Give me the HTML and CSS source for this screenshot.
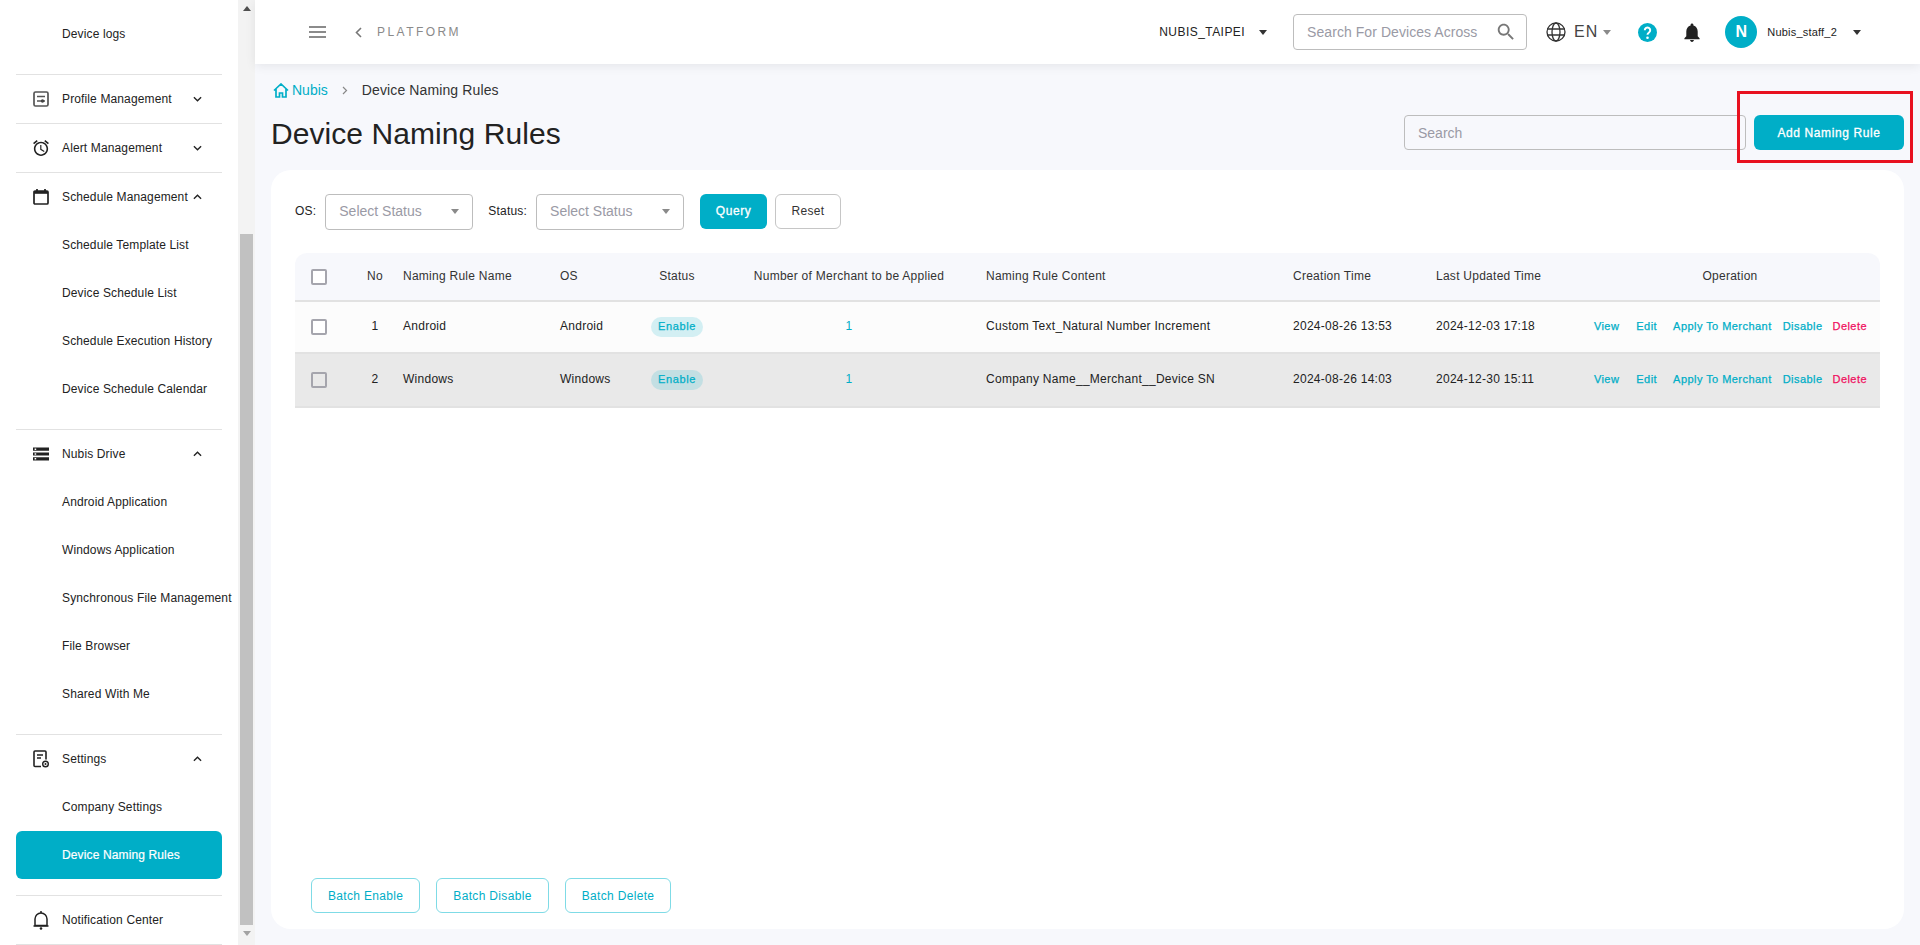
FILE: index.html
```html
<!DOCTYPE html>
<html lang="en">
<head>
<meta charset="utf-8">
<title>Device Naming Rules</title>
<link rel="stylesheet" href="styles.css">
</head>
<body>
<div class="app">
  <aside class="sidebar">
    <nav class="nav">
      <div class="group group-first">
        <a class="sub">Device logs</a>
      </div>
      <div class="group">
        <div class="head">
          <svg class="ico" viewBox="0 0 16 16"><rect x="1" y="1" width="14" height="14" rx="1.500" fill="none" stroke="#555" stroke-width="1.700"/><path d="M4 5.500h8M4 10h8" stroke="#555" stroke-width="1.300"/><circle cx="9.500" cy="10" r="1.700" fill="#444"/></svg>
          <span class="head-label">Profile Management</span>
          <svg class="chev" viewBox="0 0 10 6"><path d="M1 1l4 4 4-4" fill="none" stroke="#222" stroke-width="1.5"/></svg>
        </div>
      </div>
      <div class="group">
        <div class="head">
          <svg class="ico" viewBox="2 1.800 20 20.200"><path d="M22 5.72l-4.6-3.86-1.29 1.53 4.6 3.86L22 5.72zM7.88 3.39L6.6 1.86 2 5.71l1.29 1.53 4.59-3.85zM12.5 8H11v6l4.75 2.85.75-1.23-4-2.37V8zM12 4c-4.97 0-9 4.03-9 9s4.02 9 9 9c4.97 0 9-4.03 9-9s-4.03-9-9-9zm0 16c-3.87 0-7-3.13-7-7s3.13-7 7-7 7 3.13 7 7-3.13 7-7 7z" fill="#222"/></svg>
          <span class="head-label">Alert Management</span>
          <svg class="chev" viewBox="0 0 10 6"><path d="M1 1l4 4 4-4" fill="none" stroke="#222" stroke-width="1.5"/></svg>
        </div>
      </div>
      <div class="group group-open">
        <div class="head">
          <svg class="ico" viewBox="0 0 16 16"><path d="M4 0v2M12 0v2" stroke="#222" stroke-width="1.7"/><rect x="1" y="2" width="14" height="13" rx="1" fill="none" stroke="#222" stroke-width="1.7"/><rect x="1" y="2" width="14" height="2.800" fill="#222"/></svg>
          <span class="head-label">Schedule Management</span>
          <svg class="chev" viewBox="0 0 10 6"><path d="M1 5l4-4 4 4" fill="none" stroke="#222" stroke-width="1.5"/></svg>
        </div>
        <a class="sub">Schedule Template List</a>
        <a class="sub">Device Schedule List</a>
        <a class="sub">Schedule Execution History</a>
        <a class="sub">Device Schedule Calendar</a>
      </div>
      <div class="group group-open">
        <div class="head">
          <svg class="ico" viewBox="2 4 20 16"><path d="M2 20h20v-4H2v4zm2-3h2v2H4v-2zM2 4v4h20V4H2zm4 3H4V5h2v2zm-4 7h20v-4H2v4zm2-3h2v2H4v-2z" fill="#222"/></svg>
          <span class="head-label">Nubis Drive</span>
          <svg class="chev" viewBox="0 0 10 6"><path d="M1 5l4-4 4 4" fill="none" stroke="#222" stroke-width="1.5"/></svg>
        </div>
        <a class="sub">Android Application</a>
        <a class="sub">Windows Application</a>
        <a class="sub">Synchronous File Management</a>
        <a class="sub">File Browser</a>
        <a class="sub">Shared With Me</a>
      </div>
      <div class="group group-open">
        <div class="head">
          <svg class="ico ico-tall" viewBox="0 0 16 18"><path d="M8 16.500H2a1 1 0 0 1-1-1V2a1 1 0 0 1 1-1h10a1 1 0 0 1 1 1v7.500" fill="none" stroke="#222" stroke-width="1.6"/><path d="M4 5h6M4 8h4" stroke="#222" stroke-width="1.4"/><circle cx="12.500" cy="14" r="2.800" fill="none" stroke="#222" stroke-width="1.400"/><circle cx="12.500" cy="14" r="1" fill="#222"/></svg>
          <span class="head-label">Settings</span>
          <svg class="chev" viewBox="0 0 10 6"><path d="M1 5l4-4 4 4" fill="none" stroke="#222" stroke-width="1.5"/></svg>
        </div>
        <a class="sub">Company Settings</a>
        <a class="sub sub-active">Device Naming Rules</a>
      </div>
      <div class="group group-last">
        <div class="head">
          <svg class="ico ico-bell" viewBox="0 0 16 19"><path d="M2 14.500V8a6 6 0 0 1 12 0v6.500z" fill="none" stroke="#222" stroke-width="1.500"/><path d="M.500 15h15" stroke="#222" stroke-width="1.500"/><path d="M8 0v2" stroke="#222" stroke-width="1.500"/><circle cx="8" cy="17.500" r="1.300" fill="#222"/></svg>
          <span class="head-label">Notification Center</span>
        </div>
      </div>
    </nav>
    <div class="scrollbar">
      <span class="sb-up"></span>
      <span class="sb-thumb"></span>
      <span class="sb-down"></span>
    </div>
  </aside>

  <div class="main">
    <header class="topbar">
      <svg class="burger" viewBox="0 0 17 12"><path d="M0 1h17M0 6h17M0 11h17" stroke="#666" stroke-width="1.6"/></svg>
      <svg class="back" viewBox="0 0 7 11"><path d="M6 1L1.5 5.5 6 10" fill="none" stroke="#777" stroke-width="1.6"/></svg>
      <span class="platform">PLATFORM</span>
      <div class="top-right">
        <span class="company">NUBIS_TAIPEI</span>
        <span class="caret caret-dark caret-company"></span>
        <div class="top-search">
          <span class="top-search-text">Search For Devices Across</span>
          <svg class="top-search-ico" viewBox="0 0 24 24"><path d="M15.5 14h-.79l-.28-.27C15.41 12.59 16 11.11 16 9.5 16 5.91 13.09 3 9.5 3S3 5.91 3 9.5 5.91 16 9.5 16c1.61 0 3.09-.59 4.23-1.57l.27.28v.79l5 4.99L20.49 19l-4.99-5zm-6 0C7.01 14 5 11.99 5 9.5S7.01 5 9.5 5 14 7.01 14 9.5 11.99 14 9.5 14z" fill="#777"/></svg>
        </div>
        <svg class="globe" viewBox="0 0 20 20"><circle cx="10" cy="10" r="9" fill="none" stroke="#333" stroke-width="1.3"/><ellipse cx="10" cy="10" rx="4" ry="9" fill="none" stroke="#333" stroke-width="1.3"/><path d="M1 7h18M1 13h18" stroke="#333" stroke-width="1.3"/></svg>
        <span class="lang">EN</span>
        <span class="caret caret-grey caret-lang"></span>
        <svg class="help" viewBox="0 0 19 19"><circle cx="9.5" cy="9.5" r="9.5" fill="#00aec7"/><path d="M6.800 7.200a2.700 2.700 0 1 1 4.200 2.300c-1 .7-1.500 1.100-1.500 2.300" fill="none" stroke="#fff" stroke-width="2"/><circle cx="9.500" cy="14.800" r="1.300" fill="#fff"/></svg>
        <svg class="bell" viewBox="4 2 16 20"><path d="M12 22c1.100 0 2-.9 2-2h-4c0 1.100.89 2 2 2zm6-6v-5c0-3.070-1.640-5.640-4.500-6.320V4c0-.83-.67-1.500-1.500-1.500s-1.500.67-1.500 1.500v.68C7.630 5.360 6 7.920 6 11v5l-2 2v1h16v-1l-2-2z" fill="#222"/></svg>
        <span class="avatar">N</span>
        <span class="user">Nubis_staff_2</span>
        <span class="caret caret-dark caret-user"></span>
      </div>
    </header>

    <main class="content">
      <div class="crumbs">
        <svg class="home" viewBox="0 0 16 15"><path d="M1 7.500L8 1l7 6.500M3 6v8h3.500v-4h3v4H13V6" fill="none" stroke="#00aec7" stroke-width="1.700"/></svg>
        <span class="crumb-link">Nubis</span>
        <svg class="crumb-sep" viewBox="0 0 6 9"><path d="M1 1l3.500 3.500L1 8" fill="none" stroke="#888" stroke-width="1.200"/></svg>
        <span class="crumb-cur">Device Naming Rules</span>
      </div>
      <div class="title-row">
        <h1 class="title">Device Naming Rules</h1>
        <div class="search-box">Search</div>
        <button class="btn-add">Add Naming Rule</button>
      </div>

      <section class="card">
        <div class="filters">
          <label class="f-label f-os">OS:</label>
          <div class="select"><span>Select Status</span><i class="caret caret-grey"></i></div>
          <label class="f-label f-status">Status:</label>
          <div class="select"><span>Select Status</span><i class="caret caret-grey"></i></div>
          <button class="btn-query">Query</button>
          <button class="btn-reset">Reset</button>
        </div>

        <table class="grid">
          <colgroup>
            <col class="c1"><col class="c2"><col class="c3"><col class="c4"><col class="c5"><col class="c6"><col class="c7"><col class="c8"><col class="c9"><col class="c10">
          </colgroup>
          <thead>
            <tr>
              <th class="check"><span class="box"></span></th>
              <th class="center">No</th>
              <th>Naming Rule Name</th>
              <th>OS</th>
              <th class="center">Status</th>
              <th class="center">Number of Merchant to be Applied</th>
              <th>Naming Rule Content</th>
              <th>Creation Time</th>
              <th>Last Updated Time</th>
              <th class="center">Operation</th>
            </tr>
          </thead>
          <tbody>
            <tr class="row-a">
              <td class="check"><span class="box"></span></td>
              <td class="center">1</td>
              <td>Android</td>
              <td>Android</td>
              <td class="center"><span class="pill">Enable</span></td>
              <td class="center teal">1</td>
              <td>Custom Text_Natural Number Increment</td>
              <td>2024-08-26 13:53</td>
              <td>2024-12-03 17:18</td>
              <td class="op-cell"><div class="ops"><a class="op op-view">View</a><a class="op op-edit">Edit</a><a class="op op-apply">Apply To Merchant</a><a class="op op-dis">Disable</a><a class="op op-del">Delete</a></div></td>
            </tr>
            <tr class="row-b">
              <td class="check"><span class="box"></span></td>
              <td class="center">2</td>
              <td>Windows</td>
              <td>Windows</td>
              <td class="center"><span class="pill">Enable</span></td>
              <td class="center teal">1</td>
              <td>Company Name__Merchant__Device SN</td>
              <td>2024-08-26 14:03</td>
              <td>2024-12-30 15:11</td>
              <td class="op-cell"><div class="ops"><a class="op op-view">View</a><a class="op op-edit">Edit</a><a class="op op-apply">Apply To Merchant</a><a class="op op-dis">Disable</a><a class="op op-del">Delete</a></div></td>
            </tr>
          </tbody>
        </table>

        <div class="batch">
          <button class="btn-batch">Batch Enable</button>
          <button class="btn-batch">Batch Disable</button>
          <button class="btn-batch">Batch Delete</button>
        </div>
      </section>
    </main>
  </div>
</div>
<div class="highlight"></div>
</body>
</html>
```

FILE: styles.css
```css
* { box-sizing: border-box; }
html, body { margin: 0; padding: 0; height: 100%; overflow: hidden; }
body { font-family: "Liberation Sans", Arial, sans-serif; color: #222; background: #f7f8fc; }
button { font-family: inherit; cursor: pointer; }

.app { display: flex; height: 945px; }

/* Sidebar */
.sidebar { width: 255px; flex: none; display: flex; background: #fff; height: 945px; overflow: hidden; }
.nav { width: 238px; flex: none; padding: 10px 16px 0; }
.group { border-top: 1px solid #e2e2e2; }
.group-first { border-top: 0; padding-bottom: 16px; }
.group-open { padding-bottom: 16px; }
.group-last { border-bottom: 1px solid #e2e2e2; }
.head { height: 48px; display: flex; align-items: center; font-size: 12px; }
.ico { width: 16px; height: 16px; margin-left: 17px; flex: none; }
.ico-tall { height: 18px; }
.ico-bell { height: 19px; }
.head-label { margin-left: 13px; white-space: nowrap; letter-spacing: 0.13px; width: 131px; flex: none; }
.chev { width: 9px; height: 6px; flex: none; }
.sub { display: flex; align-items: center; height: 48px; padding-left: 46px; font-size: 12px; white-space: nowrap; letter-spacing: 0.13px; }
.sub-active { background: #00aec7; color: #fff; border-radius: 6px; -webkit-text-stroke: .2px #fff; }

.scrollbar { width: 17px; flex: none; background: #f3f3f3; display: flex; flex-direction: column; align-items: center; }
.sb-up { margin-top: 6px; border: 4px solid transparent; border-top: 0; border-bottom: 5px solid #505050; height: 0; width: 0; }
.sb-thumb { width: 13px; height: 691px; margin-top: 223px; background: #c1c1c1; }
.sb-down { margin-top: 6px; border: 4px solid transparent; border-bottom: 0; border-top: 5px solid #a3a3a3; height: 0; width: 0; }

/* Top bar */
.main { flex: 1; min-width: 0; display: flex; flex-direction: column; }
.topbar { height: 64px; flex: none; background: #fff; box-shadow: 0 2px 10px rgba(0,0,0,.08); display: flex; align-items: center; padding-left: 54px; position: relative; }
.burger { width: 17px; height: 12px; flex: none; }
.back { width: 7px; height: 11px; margin-left: 29px; flex: none; }
.platform { margin-left: 15px; font-size: 12px; letter-spacing: 2.45px; color: #8a8a8a; }
.top-right { margin-left: auto; display: flex; align-items: center; padding-right: 59px; }
.company { font-size: 12px; color: #222; letter-spacing: .45px; }
.caret { display: inline-block; width: 0; height: 0; border: 4.5px solid transparent; border-bottom: 0; border-top: 5px solid #333; flex: none; }
.caret-dark { border-top-color: #333; }
.caret-grey { border-top-color: #8a8a8a; }
.caret-company { margin-left: 14px; }
.top-search { width: 234px; height: 36px; margin-left: 26px; border: 1px solid #bdbdbd; border-radius: 4px; display: flex; align-items: center; padding-left: 13px; }
.top-search-text { width: 172px; flex: none; font-size: 14px; color: #9a9aa5; white-space: nowrap; letter-spacing: .06px; }
.top-search-ico { width: 22px; height: 22px; margin-left: 16px; flex: none; }
.globe { width: 20px; height: 20px; margin-left: 19px; flex: none; }
.lang { margin-left: 8px; font-size: 16px; color: #444; letter-spacing: 1px; }
.caret-lang { margin-left: 5px; }
.help { width: 19px; height: 19px; margin-left: 27px; flex: none; }
.bell { width: 16px; height: 19px; margin-left: 27px; flex: none; }
.avatar { width: 32px; height: 32px; margin-left: 25px; border-radius: 50%; background: #00aec7; color: #fff; font-size: 16px; font-weight: 700; display: flex; align-items: center; justify-content: center; flex: none; }
.user { margin-left: 10px; font-size: 11px; color: #222; letter-spacing: .2px; }
.caret-user { margin-left: 16px; }

/* Content */
.content { flex: 1; min-height: 0; display: flex; flex-direction: column; padding: 16px; }
.crumbs { display: flex; align-items: center; height: 20px; padding-left: 2px; font-size: 14px; }
.home { width: 16px; height: 15px; flex: none; }
.crumb-link { margin-left: 3px; color: #00aec7; }
.crumb-sep { width: 6px; height: 9px; margin-left: 14px; flex: none; }
.crumb-cur { margin-left: 14px; color: #333; letter-spacing: .12px; }
.title-row { display: flex; align-items: center; margin-top: 15px; height: 35px; }
.title { margin: 3px 0 0; font-size: 30px; font-weight: 400; color: #222; line-height: 36px; letter-spacing: .07px; }
.search-box { margin-left: auto; width: 342px; height: 35px; border: 1px solid #bdbdbd; border-radius: 4px; display: flex; align-items: center; padding-left: 13px; font-size: 14px; color: #9a9aa5; }
.btn-add { width: 150px; height: 35px; margin-left: 8px; border: 0; border-radius: 6px; background: #00aec7; color: #fff; font-size: 12px; letter-spacing: .6px; -webkit-text-stroke: .3px #fff; }

.card { flex: 1; min-height: 0; margin-top: 20px; background: #fff; border-radius: 20px; padding: 24px 24px 16px; display: flex; flex-direction: column; }
.filters { display: flex; align-items: flex-start; height: 35px; }
.f-label { font-size: 12px; color: #222; letter-spacing: .2px; line-height: 34px; }
.select { width: 148px; height: 36px; border: 1px solid #bdbdbd; border-radius: 4px; display: flex; align-items: center; justify-content: space-between; padding: 0 13px 2px; font-size: 14px; color: #9a9aa5; margin-left: 9px; }
.f-status { margin-left: 15px; }
.btn-query { width: 67px; height: 35px; margin-left: 16px; border: 0; border-radius: 6px; background: #00aec7; color: #fff; font-size: 12px; letter-spacing: .6px; padding-bottom: 2px; -webkit-text-stroke: .3px #fff; }
.btn-reset { width: 66px; height: 35px; margin-left: 8px; border: 1px solid #c6c6c6; border-radius: 6px; background: #fff; color: #333; font-size: 12px; letter-spacing: .3px; padding-bottom: 2px; }

.grid { width: 1585px; table-layout: fixed; border-collapse: separate; border-spacing: 0; margin-top: 24px; font-size: 12px; }
.c1 { width: 60px; } .c2 { width: 40px; } .c3 { width: 157px; } .c4 { width: 82px; } .c5 { width: 86px; }
.c6 { width: 258px; } .c7 { width: 307px; } .c8 { width: 143px; } .c9 { width: 152px; } .c10 { width: 300px; }
.grid th { height: 49px; background: #f7f8fc; font-weight: 400; text-align: left; padding: 0 8px 2px; border-bottom: 2px solid #e2e2e2; color: #333; letter-spacing: .26px; white-space: nowrap; }
.grid th:first-child { border-top-left-radius: 12px; }
.grid th:last-child { border-top-right-radius: 12px; }
.grid td { padding: 0 8px 2px; border-bottom: 2px solid #e2e2e2; white-space: nowrap; color: #222; letter-spacing: .27px; }
.grid th.center, .grid td.center { text-align: center; }
.grid th.check, .grid td.check { padding: 0 0 0 16px; }
.row-a td { height: 52px; background: #fcfcfc; }
.row-b td { height: 54px; background: #e9e9e9; }
.box { display: block; width: 16px; height: 16px; border: 2px solid #a5a5ad; border-radius: 2px; background: #fff; }
.row-b .box { background: transparent; }
.grid td.center .pill { margin-top: 2px; }
.pill { display: inline-block; height: 20px; line-height: 19px; padding: 0 7px; border-radius: 10px; background: rgba(0,174,199,.16); color: #00aec7; font-size: 11px; letter-spacing: .6px; -webkit-text-stroke: .25px #00aec7; }
.grid td.teal { color: #00aec7; }
.ops { display: flex; justify-content: flex-end; padding-right: 5px; font-size: 11px; color: #00aec7; -webkit-text-stroke: .25px; }
.op { white-space: nowrap; letter-spacing: .45px; }
.op-view { margin-right: 17px; }
.op-edit { margin-right: 16px; }
.op-apply { margin-right: 11px; }
.op-dis { margin-right: 10px; }
.op-del { color: #f0105f; }

.batch { margin-top: auto; display: flex; padding-left: 16px; }
.btn-batch { height: 35px; padding: 0 16px; margin-right: 16px; border: 1px solid #7fdbe6; border-radius: 6px; background: #fff; color: #00aec7; font-size: 12px; letter-spacing: .33px; }

.highlight { position: absolute; left: 1737px; top: 91px; width: 176px; height: 72px; border: 3px solid #e8111f; }
```
